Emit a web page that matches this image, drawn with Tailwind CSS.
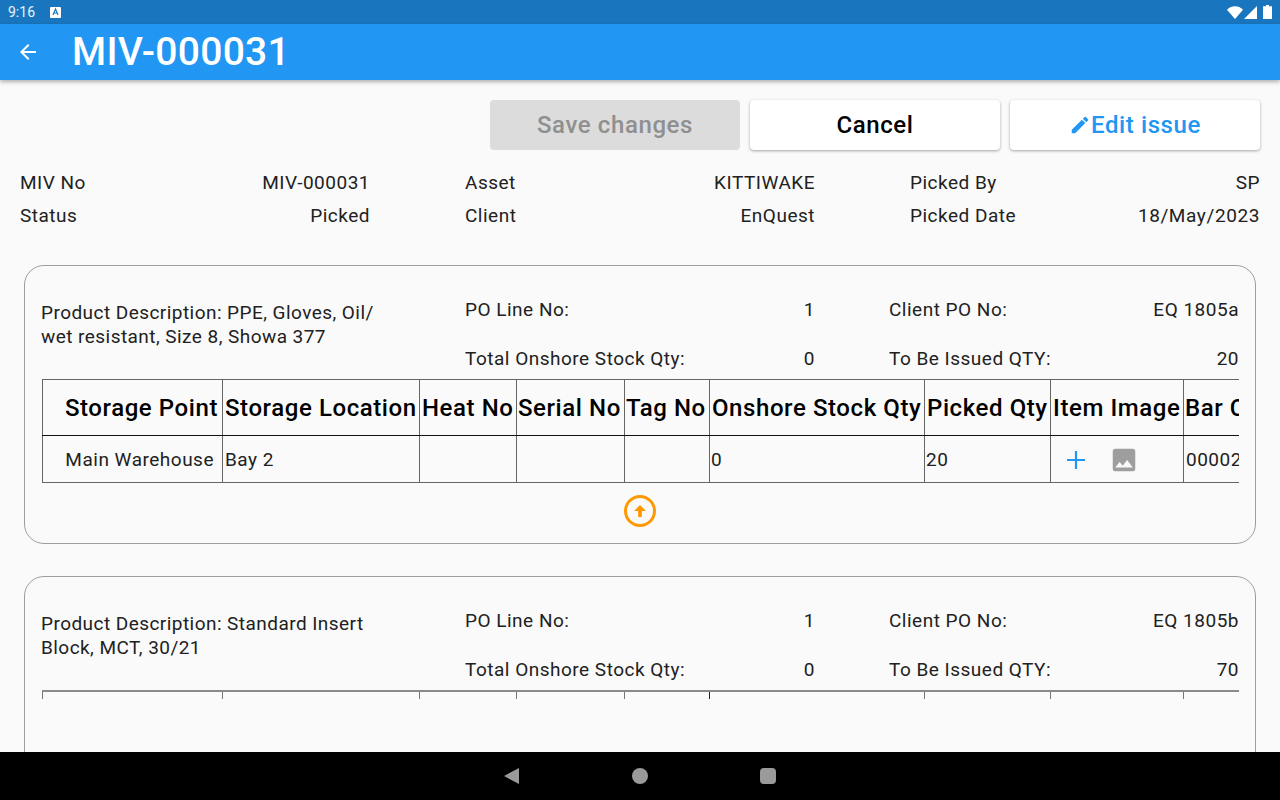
<!DOCTYPE html>
<html lang="en">
<head>
  <meta charset="UTF-8">
  <title>MIV-000031</title>
  <script src="https://cdn.jsdelivr.net/npm/@tailwindcss/browser@4"></script>
</head>
<body>
  <div class="w-[1280px] h-[800px] flex flex-col overflow-hidden bg-[#fafafa] text-[#212121] font-['Roboto',sans-serif] text-[19px] tracking-[0.5px]">
    <!-- Status bar -->
    <div class="h-6 shrink-0 bg-[#1976be] flex items-center justify-between pl-2 pr-2 text-white tracking-normal">
      <div class="flex items-center gap-[15px]">
        <span class="text-[14px] text-white/90">9:16</span>
        <svg width="11" height="11" viewBox="0 0 11 11"><rect width="11" height="11" rx="1" fill="#fff"/><path d="M3 8l2.500-6L8 8M4 6h3" stroke="#1976be" stroke-width="1.200" fill="none"/></svg>
      </div>
      <div class="flex items-center">
        <svg width="16" height="13" viewBox="0 0 16 13"><path d="M0 3.800C4.500-.8 11.500-.8 16 3.800L8 13z" fill="#fff"/></svg>
        <svg width="13" height="13" viewBox="0 0 13 13" class="ml-px"><path d="M13 0v13H0z" fill="#fff"/></svg>
        <svg width="9" height="14" viewBox="0 0 9 14" class="ml-[6px]"><path d="M3 0h3v1.200h3V14H0V1.200h3z" fill="#fff"/></svg>
      </div>
    </div>
    <!-- App bar -->
    <div class="h-14 shrink-0 bg-[#2196f3] flex items-center pl-4 text-white shadow-[0_2px_4px_rgba(0,0,0,0.3)] relative">
      <svg width="24" height="24" viewBox="0 0 24 24" fill="#fff"><path d="M20 11H7.830l5.590-5.590L12 4l-8 8 8 8 1.410-1.410L7.830 13H20z"/></svg>
      <span class="ml-8 text-[39px] tracking-[0.3px] font-medium leading-none">MIV-000031</span>
    </div>

    <!-- Content -->
    <div class="flex-1 min-h-0 overflow-hidden px-5 pt-5">
      <div class="flex justify-end gap-[10px] tracking-[0.6px]">
        <button class="w-[250px] h-[50px] rounded bg-[#dcdcdc] text-[24px] font-medium text-[#8f8f8f]">Save changes</button>
        <button class="w-[250px] h-[50px] rounded bg-white text-[24px] font-medium text-black shadow-[0_1px_3px_rgba(0,0,0,0.35)]">Cancel</button>
        <button class="w-[250px] h-[50px] rounded bg-white text-[24px] font-medium text-[#2196f3] shadow-[0_1px_3px_rgba(0,0,0,0.35)] flex items-center justify-center">
          <svg width="22" height="22" viewBox="0 0 24 24" fill="#2196f3"><path d="M3 17.250V21h3.750L17.810 9.940l-3.750-3.750L3 17.250zM20.710 7.040a1 1 0 0 0 0-1.410l-2.340-2.340a1 1 0 0 0-1.410 0l-1.830 1.830 3.750 3.750 1.830-1.830z"/></svg>
          <span>Edit issue</span>
        </button>
      </div>

      <!-- Issue summary -->
      <div class="grid grid-cols-[350px_350px_350px] gap-x-[95px] gap-y-px mt-[17px] h-[65px]">
        <div class="flex justify-between h-8 items-center"><span>MIV No</span><span>MIV-000031</span></div>
        <div class="flex justify-between h-8 items-center"><span>Asset</span><span>KITTIWAKE</span></div>
        <div class="flex justify-between h-8 items-center"><span>Picked By</span><span>SP</span></div>
        <div class="flex justify-between h-8 items-center"><span>Status</span><span>Picked</span></div>
        <div class="flex justify-between h-8 items-center"><span>Client</span><span>EnQuest</span></div>
        <div class="flex justify-between h-8 items-center"><span>Picked Date</span><span class="tracking-[0.6px]">18/May/2023</span></div>
      </div>

      <!-- Line 1 -->
      <div class="mt-[33px] ml-1 w-[1232px] h-[279px] border border-[#9e9e9e] rounded-[20px] pl-4 pr-4 pt-[30px]">
        <div class="flex h-[83px]">
          <div class="w-[424px] pr-[60px] leading-[23.5px] pt-[5px] tracking-[0.45px]">Product Description: PPE, Gloves, Oil/ wet resistant, Size 8, Showa 377</div>
          <div class="w-[350px]">
            <div class="flex justify-between h-[27px] items-center mt-px"><span>PO Line No:</span><span>1</span></div>
            <div class="flex justify-between h-[27px] items-center mt-[22px]"><span>Total Onshore Stock Qty:</span><span>0</span></div>
          </div>
          <div class="w-[350px] ml-[74px]">
            <div class="flex justify-between h-[27px] items-center mt-px"><span>Client PO No:</span><span>EQ 1805a</span></div>
            <div class="flex justify-between h-[27px] items-center mt-[22px]"><span>To Be Issued QTY:</span><span>20</span></div>
          </div>
        </div>
        <div class="ml-px w-[1197px] overflow-hidden">
          <table class="border-collapse w-[1290px] table-fixed">
            <colgroup>
              <col class="w-[180px]"><col class="w-[197px]"><col class="w-[97px]"><col class="w-[108px]"><col class="w-[85px]"><col class="w-[215px]"><col class="w-[126px]"><col class="w-[133px]"><col class="w-[149px]">
            </colgroup>
            <tr class="h-[56px] text-[24px] text-black whitespace-nowrap tracking-[0.58px]">
              <th class="border border-[#666] border-b-[#111] font-medium text-right pr-[4px]">Storage Point</th>
              <th class="border border-[#666] border-b-[#111] font-medium text-left pl-[2px]">Storage Location</th>
              <th class="border border-[#666] border-b-[#111] font-medium text-left pl-[2px]">Heat No</th>
              <th class="border border-[#666] border-b-[#111] font-medium text-left pl-[1px]">Serial No</th>
              <th class="border border-[#666] border-b-[#111] font-medium text-left pl-[1px]">Tag No</th>
              <th class="border border-[#666] border-b-[#111] font-medium text-left pl-[2px]">Onshore Stock Qty</th>
              <th class="border border-[#666] border-b-[#111] font-medium text-left pl-[2px]">Picked Qty</th>
              <th class="border border-[#666] border-b-[#111] font-medium text-left pl-[2px]">Item Image</th>
              <th class="border border-[#666] border-b-[#111] font-medium text-left pl-[1px]">Bar Code</th>
            </tr>
            <tr class="h-[47px]">
              <td class="border border-[#666] border-t-[#111] text-right pr-[8px] pt-[2px]">Main Warehouse</td>
              <td class="border border-[#666] border-t-[#111] pl-[2px] pt-[2px]">Bay 2</td>
              <td class="border border-[#666] border-t-[#111]"></td>
              <td class="border border-[#666] border-t-[#111]"></td>
              <td class="border border-[#666] border-t-[#111]"></td>
              <td class="border border-[#666] border-t-[#111] pl-[1px] pt-[2px]">0</td>
              <td class="border border-[#666] border-t-[#111] pl-[1px] pt-[2px]">20</td>
              <td class="border border-[#666] border-t-[#111] pt-[2px]">
                <div class="flex items-center pl-[15px] gap-[26px]">
                  <svg width="20" height="20" viewBox="0 0 20 20" fill="none" stroke="#2196f3" stroke-width="2.200"><path d="M10 1v18M1 10h18"/></svg>
                  <svg width="30" height="30" viewBox="0 0 24 24" fill="#9e9e9e" class="-ml-[3px]"><path d="M21 19V5a2 2 0 0 0-2-2H5a2 2 0 0 0-2 2v14a2 2 0 0 0 2 2h14a2 2 0 0 0 2-2zM8.500 13.500l2.500 3.010L14.500 12l4.500 6H5l3.500-4.500z"/></svg>
                </div>
              </td>
              <td class="border border-[#666] border-t-[#111] pl-[2px] pt-[2px]">00002</td>
            </tr>
          </table>
        </div>
        <div class="flex justify-center mt-[12px]">
          <div class="w-8 h-8 rounded-full border-[3px] border-[#ff9800] flex items-center justify-center">
            <svg width="18" height="18" viewBox="0 0 24 24" fill="#ff9800"><path d="M12 4l-8 8h5.500v8h5v-8H20z"/></svg>
          </div>
        </div>
      </div>

      <!-- Line 2 -->
      <div class="mt-[32px] ml-1 w-[1232px] h-[300px] border border-[#9e9e9e] rounded-[20px] pl-4 pr-4 pt-[30px]">
        <div class="flex h-[83px]">
          <div class="w-[424px] pr-[60px] leading-[23.5px] pt-[5px] tracking-[0.45px]">Product Description: Standard Insert Block, MCT, 30/21</div>
          <div class="w-[350px]">
            <div class="flex justify-between h-[27px] items-center mt-px"><span>PO Line No:</span><span>1</span></div>
            <div class="flex justify-between h-[27px] items-center mt-[22px]"><span>Total Onshore Stock Qty:</span><span>0</span></div>
          </div>
          <div class="w-[350px] ml-[74px]">
            <div class="flex justify-between h-[27px] items-center mt-px"><span>Client PO No:</span><span>EQ 1805b</span></div>
            <div class="flex justify-between h-[27px] items-center mt-[22px]"><span>To Be Issued QTY:</span><span>70</span></div>
          </div>
        </div>
        <div class="ml-px flex h-[9px] border-t-2 border-[#8a8a8a] w-[1197px]">
          <div class="w-[180px] border-l border-[#777]"></div>
          <div class="w-[197px] border-l border-[#777]"></div>
          <div class="w-[97px] border-l border-[#777]"></div>
          <div class="w-[108px] border-l border-[#777]"></div>
          <div class="w-[85px] border-l border-[#777]"></div>
          <div class="w-[215px] border-l border-[#222]"></div>
          <div class="w-[126px] border-l border-[#777]"></div>
          <div class="w-[133px] border-l border-[#777]"></div>
          <div class="w-[56px] border-l border-[#777]"></div>
        </div>
      </div>
    </div>

    <!-- Nav bar -->
    <div class="h-12 shrink-0 bg-black flex items-center justify-center gap-[112px]">
      <svg width="16" height="16" viewBox="0 0 16 16"><path d="M15 0v16L0 8z" fill="#9a9a9a"/></svg>
      <div class="w-4 h-4 rounded-full bg-[#9a9a9a]"></div>
      <div class="w-4 h-4 rounded-sm bg-[#9a9a9a]"></div>
    </div>
  </div>
</body>
</html>
